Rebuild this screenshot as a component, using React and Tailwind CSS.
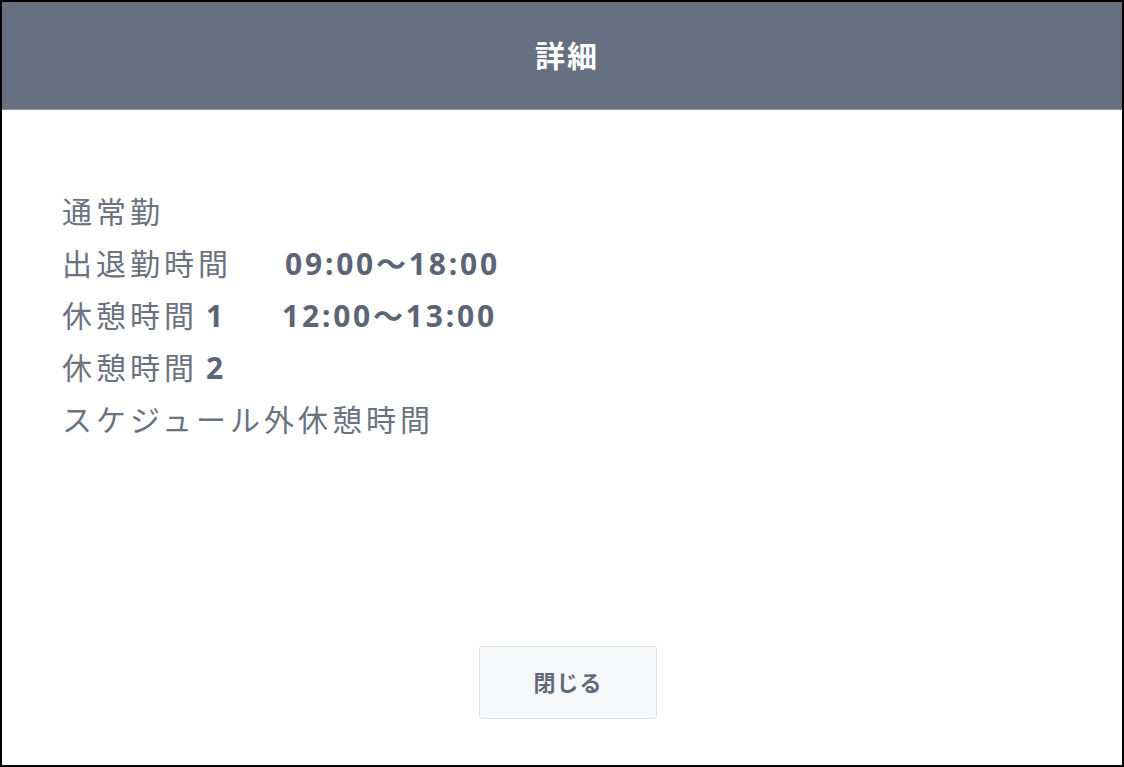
const rows = [
  { label: "出退勤時間", value: "09:00～18:00", offset: "w-[223px]" },
  { label: "休憩時間 1", value: "12:00～13:00", offset: "w-[220px]" },
  { label: "休憩時間 2", value: "", offset: "w-[220px]" },
];

const Label = ({ text }) => {
  // 数字だけ太字
  const parts = text.split(" ");
  return (
    <span className="tracking-[4px] text-[30px] text-[#6b7280]">
      {parts[0]}
      {parts[1] && (
        <span className="ml-[8px] font-bold text-[30px] tracking-[2px] text-[#5b6577]">
          {parts[1]}
        </span>
      )}
    </span>
  );
};

export default function App() {
  return (
    <div
      className="w-[1124px] h-[767px] border-2 border-black bg-white flex flex-col"
      style={{ fontFamily: '"Noto Sans", "Noto Sans CJK JP", sans-serif' }}
    >
      <div className="h-[108px] shrink-0 bg-[#667080] border-b border-[#8a93a3] flex items-center justify-center pl-[10px]">
        <h1 className="text-white font-bold text-[30px] tracking-[2px]">詳細</h1>
      </div>

      <div className="flex-1 flex flex-col pl-[60px] pt-[75px]">
        <div className="h-[52px] flex items-center">
          <Label text="通常勤" />
        </div>
        {rows.map((row) => (
          <div key={row.label} className="h-[52px] flex items-center">
            <div className={row.offset}>
              <Label text={row.label} />
            </div>
            {row.value && (
              <span className="font-bold text-[30px] tracking-[2.8px] text-[#5b6577]">
                {row.value}
              </span>
            )}
          </div>
        ))}
        <div className="h-[52px] flex items-center">
          <Label text="スケジュール外休憩時間" />
        </div>
      </div>

      <div className="flex justify-center pl-[12px] pb-[46px]">
        <button
          type="button"
          className="w-[178px] h-[73px] bg-[#f7f8fa] border border-[#dde1ec] rounded-[3px] text-[22px] font-bold text-[#5f6b7a] tracking-[1px]"
        >
          閉じる
        </button>
      </div>
    </div>
  );
}
